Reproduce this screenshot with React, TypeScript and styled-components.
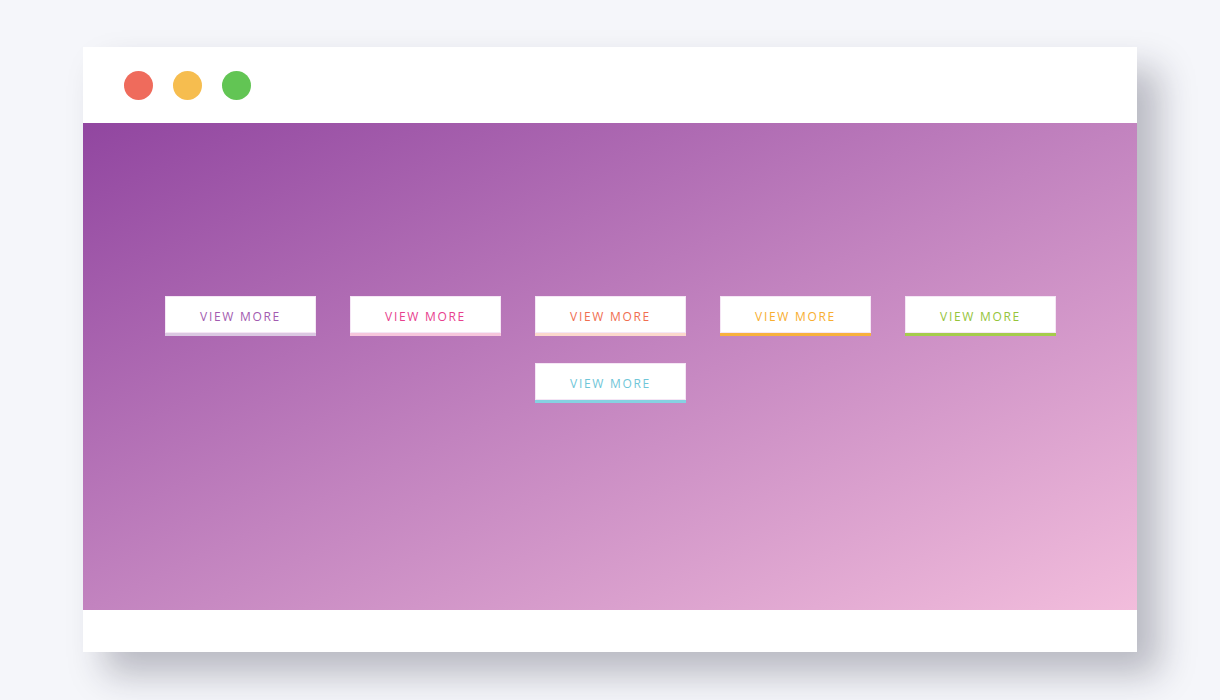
import React from "react";
import styled, { createGlobalStyle } from "styled-components";

const Global = createGlobalStyle`
  html, body { margin: 0; padding: 0; background: #f5f6fa; }
  body { font-family: "Open Sans", "Liberation Sans", sans-serif; }
`;

const Page = styled.div`
  width: 1220px;
  height: 700px;
  padding: 47px 0 0 83px;
  box-sizing: border-box;
  background: #f5f6fa;
  overflow: hidden;
`;

const Window = styled.div`
  width: 1054px;
  display: flex;
  flex-direction: column;
  background: #fff;
  box-shadow: 22px 22px 34px rgba(30, 30, 50, 0.28);
`;

const TitleBar = styled.div`
  height: 76px;
  display: flex;
  align-items: center;
  gap: 20px;
  padding-left: 41px;
  box-sizing: border-box;
`;

const Dot = styled.span<{ $c: string }>`
  width: 29px;
  height: 29px;
  border-radius: 50%;
  background: ${(p) => p.$c};
  margin-top: 1px;
`;

const Stage = styled.div`
  height: 487px;
  background: linear-gradient(to bottom right, #9146a0 0%, #c283bf 50%, #f2bddc 100%);
  box-sizing: border-box;
  padding-top: 173px;
`;

const Buttons = styled.div`
  display: flex;
  flex-wrap: wrap;
  justify-content: center;
  column-gap: 34px;
  row-gap: 27px;
`;

const Button = styled.button<{ $text: string; $line: string }>`
  width: 151px;
  height: 40px;
  box-sizing: border-box;
  border: none;
  border-bottom: 3px solid ${(p) => p.$line};
  background: #fff;
  color: ${(p) => p.$text};
  font-family: "Open Sans", "Liberation Sans", sans-serif;
  font-size: 12px;
  font-weight: 500;
  letter-spacing: 1.7px;
  text-transform: uppercase;
  padding: 3px 0 0 1px;
  cursor: pointer;
  box-shadow: inset 0 0 0 1px rgba(235, 205, 235, 0.5);
`;

const Footer = styled.div`
  height: 42px;
  background: #fff;
`;

const buttons = [
  { text: "#a35bb0", line: "#dbc8e2" },
  { text: "#e8408e", line: "#f6c6dc" },
  { text: "#f06e50", line: "#fbd8cc" },
  { text: "#f8ae30", line: "#f8b13e" },
  { text: "#96c43a", line: "#a5cc4c" },
  { text: "#6fc6d8", line: "#86d1e2" },
];

export default function App() {
  return (
    <>
      <Global />
      <Page>
        <Window>
          <TitleBar>
            <Dot $c="#ef6b5c" />
            <Dot $c="#f6bd4f" />
            <Dot $c="#62c554" />
          </TitleBar>
          <Stage>
            <Buttons>
              {buttons.map((b, i) => (
                <Button key={i} $text={b.text} $line={b.line}>
                  View More
                </Button>
              ))}
            </Buttons>
          </Stage>
          <Footer />
        </Window>
      </Page>
    </>
  );
}
